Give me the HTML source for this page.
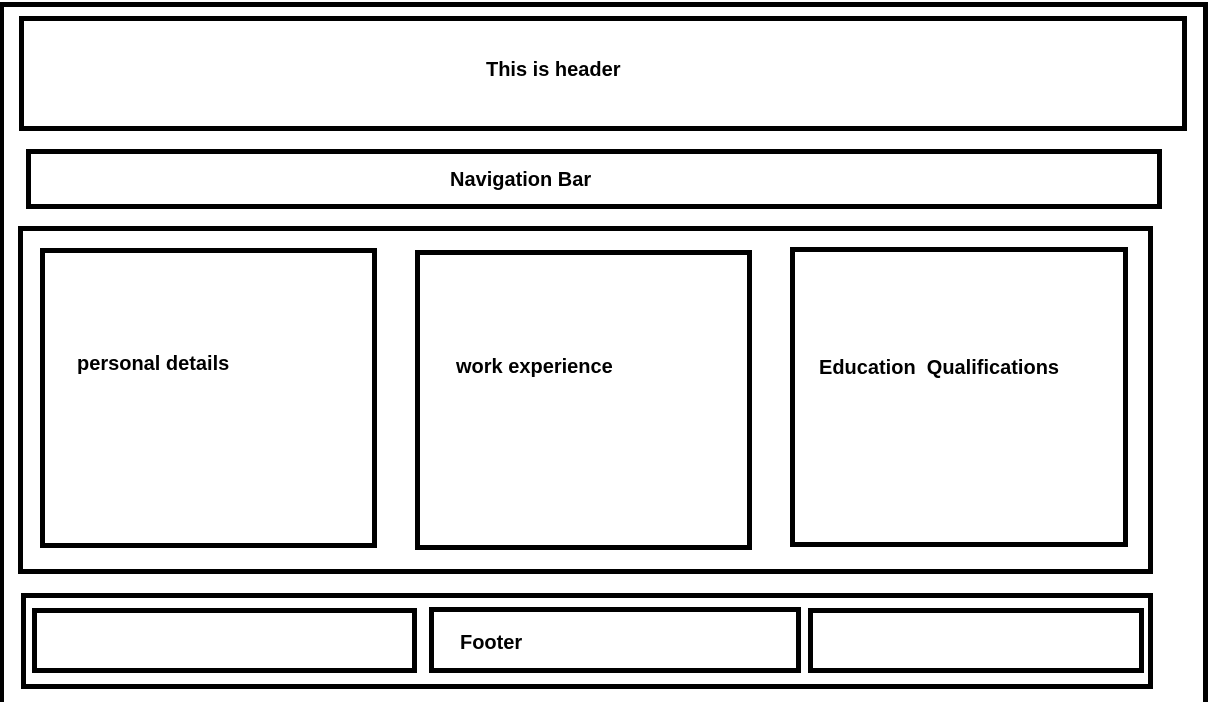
<!DOCTYPE html>
<html><head><style>
body{margin:0;width:1224px;height:689px;background:#fff;position:relative;overflow:hidden;font-family:"Liberation Sans",sans-serif;}
.b{position:absolute;border:5px solid #000;box-sizing:border-box;}
.t{position:absolute;font-weight:bold;font-size:20px;color:#000;white-space:pre;}
</style></head><body>
<div class="b" style="left:-1px;top:2px;width:1209px;height:700px;border-bottom:none"></div>
<div class="b" style="left:19px;top:16px;width:1168px;height:115px"></div>
<div class="t" style="left:486px;top:59px">This is header</div>
<div class="b" style="left:26px;top:149px;width:1136px;height:60px"></div>
<div class="t" style="left:450px;top:169px">Navigation Bar</div>
<div class="b" style="left:18px;top:226px;width:1135px;height:348px"></div>
<div class="b" style="left:40px;top:248px;width:337px;height:300px"></div>
<div class="b" style="left:415px;top:250px;width:337px;height:300px"></div>
<div class="b" style="left:790px;top:247px;width:338px;height:300px"></div>
<div class="t" style="left:77px;top:353px">personal details</div>
<div class="t" style="left:456px;top:356px">work experience</div>
<div class="t" style="left:819px;top:357px">Education  Qualifications</div>
<div class="b" style="left:21px;top:593px;width:1132px;height:96px"></div>
<div class="b" style="left:32px;top:608px;width:385px;height:65px"></div>
<div class="b" style="left:429px;top:607px;width:372px;height:66px"></div>
<div class="b" style="left:808px;top:608px;width:336px;height:65px"></div>
<div class="t" style="left:460px;top:632px">Footer</div>
</body></html>
